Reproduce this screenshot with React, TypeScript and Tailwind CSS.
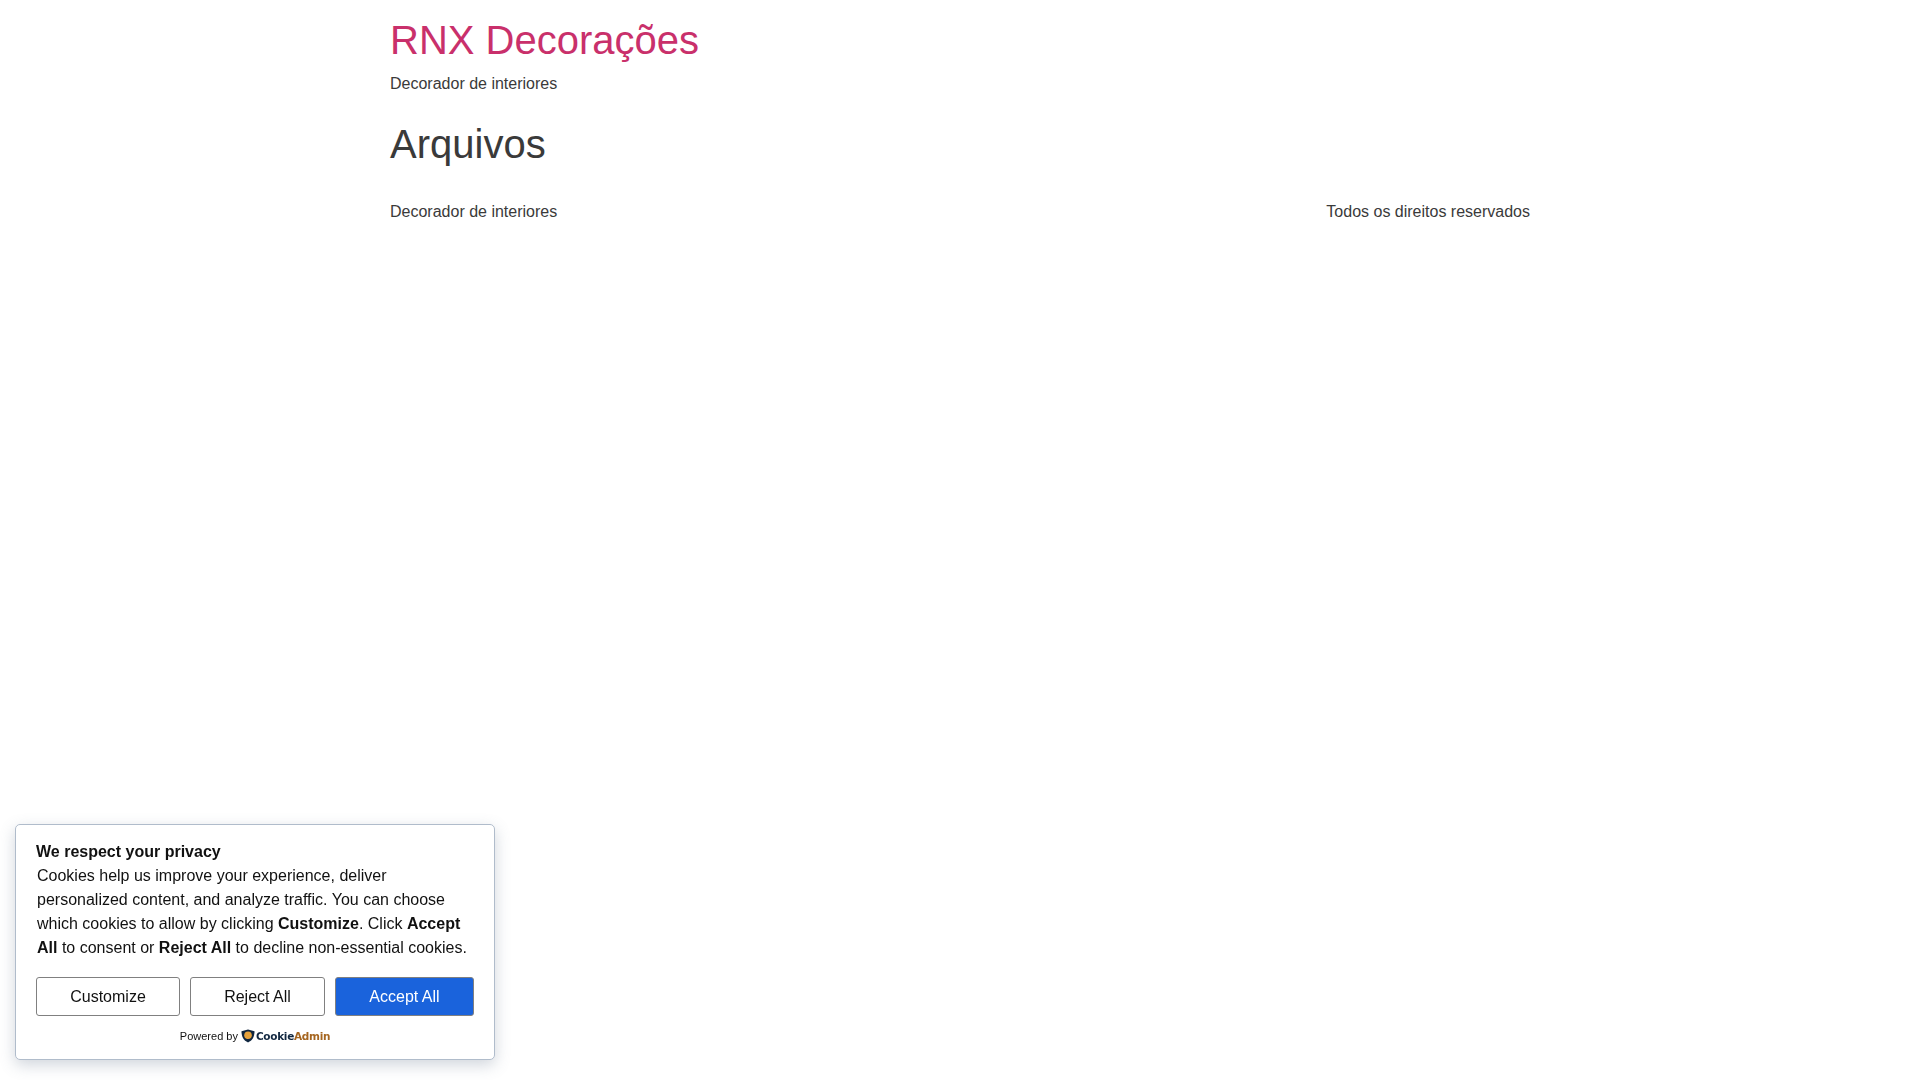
export default function App() {
  return (
    <div className="min-h-screen bg-white text-[16px] leading-[24px] text-[#3a3a3a] font-['Liberation_Sans',Arial,sans-serif]">
      <div className="mx-auto w-[1170px] px-[15px]">
        <header className="pt-[16px]">
          <h1 className="text-[40px] leading-[48px] font-normal text-[#c9306b]">RNX Decorações</h1>
          <p className="mt-[8px]">Decorador de interiores</p>
        </header>
        <main className="mt-[24px]">
          <h1 className="text-[40px] leading-[48px] font-normal">Arquivos</h1>
        </main>
        <footer className="mt-[32px] flex justify-between">
          <span>Decorador de interiores</span>
          <span>Todos os direitos reservados</span>
        </footer>
      </div>

      {/* cookie banner */}
      <div className="fixed left-[15px] bottom-[20px] w-[480px] h-[236px] rounded-[5px] border border-[#b0bccb] bg-white px-[20px] pt-[15px] text-[#111] shadow-[0_5px_15px_rgba(100,116,139,0.3)]">
        <div className="font-bold">We respect your privacy</div>
        <p className="pl-px">
          Cookies help us improve your experience, deliver personalized content, and analyze traffic. You can choose which cookies to allow by clicking <b>Customize</b>. Click <b>Accept All</b> to consent or <b>Reject All</b> to decline non-essential cookies.
        </p>
        <div className="mt-[17px] flex gap-[10px]">
          <button className="h-[39px] w-[144px] rounded-[3px] border border-[#808080] bg-white">Customize</button>
          <button className="h-[39px] w-[135px] rounded-[3px] border border-[#808080] bg-white">Reject All</button>
          <button className="h-[39px] w-[139px] rounded-[3px] border border-[#808080] bg-[#1a63dc] text-white">Accept All</button>
        </div>
        <div className="mt-[10px] flex items-center justify-center text-[11px] leading-[20px]">
          <span>Powered by</span>
          <svg className="ml-[3px]" width="14" height="14" viewBox="0 0 14 14">
            <path d="M7 .5 13.5 2.200C13.600 7.500 11.500 11.500 7 13.500 2.500 11.500.4 7.500.5 2.200Z" fill="#10263f" />
            <circle cx="7" cy="6.200" r="3.800" fill="#e6a23c" />
          </svg>
          <span className="ml-[1px] font-['DejaVu_Sans',sans-serif] text-[10.5px] font-bold tracking-[-0.3px]">
            <span className="text-[#10263f]">Cookie</span>
            <span className="text-[#a5651f]">Admin</span>
          </span>
        </div>
      </div>
    </div>
  );
}
